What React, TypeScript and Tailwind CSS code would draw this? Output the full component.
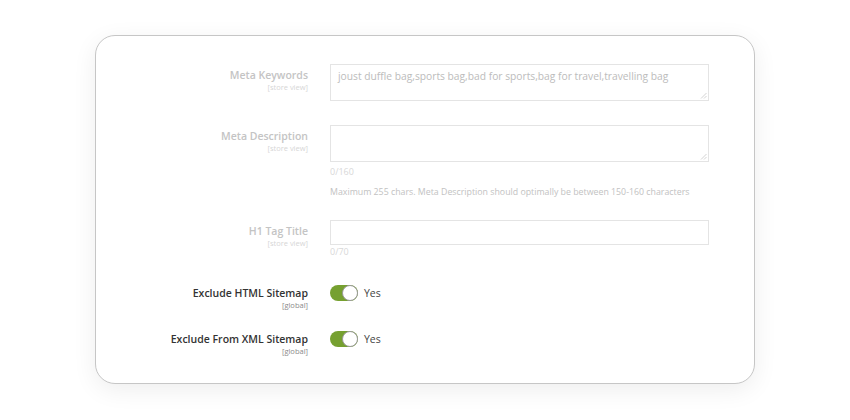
import React from "react";

type FieldProps = {
  label: string;
  scope: string;
  muted?: boolean;
  children: React.ReactNode;
  className?: string;
};

function FieldRow({ label, scope, muted = true, children, className = "" }: FieldProps) {
  return (
    <div className={["flex gap-[22px]", className].join(" ")}>
      <div className="w-[212px] shrink-0 pt-[4px] text-right">
        <div
          className={[
            "text-[10.5px] font-semibold leading-[14px]",
            muted ? "text-[#c4c4c4]" : "text-[#333333]",
          ].join(" ")}
        >
          {label}
        </div>
        <div
          className={[
            "text-[7.5px] leading-[10px]",
            muted ? "text-[#d6d6d6]" : "text-[#8a8a8a]",
          ].join(" ")}
        >
          {scope}
        </div>
      </div>
      <div className="w-[379px]">{children}</div>
    </div>
  );
}

// textarea with a faint grip drawn in the corner instead of the native one
function TextArea({ value }: { value?: string }) {
  return (
    <div className="relative">
      <textarea
        readOnly
        defaultValue={value}
        className="block h-[37px] w-full resize-none border border-[#e4e4e4] px-[7px] py-[4px] text-[10.25px] leading-[14px] text-[#bcbcbc] outline-none"
        style={{ fontFamily: "inherit" }}
      />
      <svg
        className="pointer-events-none absolute bottom-[2px] right-[2px]"
        width="7"
        height="7"
        viewBox="0 0 7 7"
      >
        <path d="M6.5 1 L1 6.5 M6.5 4 L4 6.5" stroke="#c8c8c8" strokeWidth="0.8" />
      </svg>
    </div>
  );
}

function Toggle({ on = true }: { on?: boolean }) {
  return (
    <div className="mt-[3px] flex items-center gap-[6px]">
      <div
        className={[
          "relative h-[16px] w-[28px] rounded-full",
          on ? "bg-[#76a030]" : "bg-[#cccccc]",
        ].join(" ")}
      >
        <div className="absolute right-0 top-0 h-[16px] w-[16px] rounded-full border border-[#9a9a9a] bg-white" />
      </div>
      <span className="text-[10.5px] leading-[14px] text-[#444444]">Yes</span>
    </div>
  );
}

export default function App() {
  return (
    <div
      className="flex h-[420px] w-[850px] justify-center bg-white pt-[35px]"
      style={{ fontFamily: '"Open Sans", "Noto Sans", sans-serif' }}
    >
      <div className="h-[349px] w-[660px] rounded-[20px] border border-[#c6c6c6] bg-white pt-[28px] shadow-[0_6px_24px_rgba(0,0,0,0.07)]">
        <FieldRow label="Meta Keywords" scope="[store view]">
          <TextArea value="joust duffle bag,sports bag,bad for sports,bag for travel,travelling bag" />
        </FieldRow>

        <FieldRow label="Meta Description" scope="[store view]" className="mt-[24px]">
          <TextArea />
          <div className="mt-[3px] text-[9px] leading-[14px] text-[#d8d8d8]">0/160</div>
          <div className="mt-[6px] text-[8.8px] leading-[14px] text-[#c2c2c2]">
            Maximum 255 chars. Meta Description should optimally be between 150-160 characters
          </div>
        </FieldRow>

        <FieldRow label="H1 Tag Title" scope="[store view]" className="mt-[21px]">
          <div className="h-[25px] w-full border border-[#e4e4e4]" />
          <div className="text-[9px] leading-[14px] text-[#d8d8d8]">0/70</div>
        </FieldRow>

        <FieldRow label="Exclude HTML Sitemap" scope="[global]" muted={false} className="mt-[23px]">
          <Toggle />
        </FieldRow>

        <FieldRow label="Exclude From XML Sitemap" scope="[global]" muted={false} className="mt-[18px]">
          <Toggle />
        </FieldRow>
      </div>
    </div>
  );
}
